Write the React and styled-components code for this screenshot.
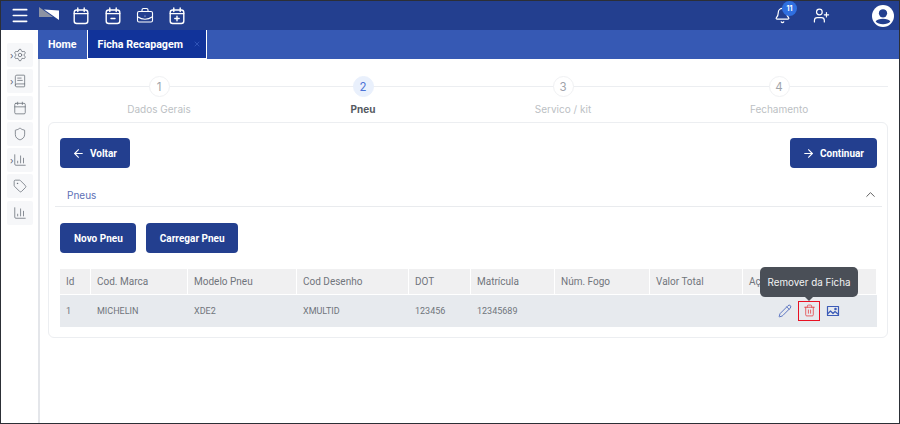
import React from "react";
import styled, { createGlobalStyle } from "styled-components";
import { Menu, BriefcaseBusiness, Bell, UserPlus, Settings, BookText, Calendar, Shield, ChartColumn, Tag, ArrowLeft, ArrowRight, ChevronUp, Pencil, Trash2, X } from "lucide-react";

const Global = createGlobalStyle`
  html, body { margin: 0; padding: 0; background: #fff; }
  * { box-sizing: border-box; }
  body { font-family: Inter, "Noto Sans", sans-serif; }
`;
const Frame = styled.div`
  width: 900px; height: 424px; border: 1px solid #2c2f36;
  display: flex; flex-direction: column; overflow: hidden; position: relative; background: #fff;
`;
const TopBar = styled.header`
  height: 29px; flex: none; background: #233f8f; display: flex; align-items: center; color: #fff; padding-left: 9px; padding-right: 5px;
`;
const MenuBtn = styled.div`display: flex; width: 20px; justify-content: center; margin-right: 9px;`;
const Logo = styled.svg`width: 21px; height: 14px; margin-right: 12px; margin-top: -3px;`;
const TopIcons = styled.div`display: flex; gap: 14px; align-items: center;`;
const CalIcon = styled.svg`width: 18px; height: 18px; fill: none; stroke: #fff; stroke-width: 1.4; stroke-linecap: round;`;
const Spacer = styled.div`flex: 1;`;
const BellWrap = styled.div`position: relative; display: flex; margin-right: 22px;`;
const Badge = styled.span`
  position: absolute; top: -6px; left: 8px; width: 15px; height: 15px; border-radius: 50%; background: #2f6fe0; color: #fff;
  font-size: 7px; font-weight: 700; display: flex; align-items: center; justify-content: center;
`;
const Avatar = styled.svg`width: 22px; height: 22px; margin-left: 42px;`;
const Body = styled.div`flex: 1; display: flex; min-height: 0;`;
const Sidebar = styled.aside`
  width: 37px; flex: none; padding: 13px 0 0 6px; display: flex; flex-direction: column; gap: 2.3px;
`;
const SideItem = styled.div`
  width: 26px; height: 24px; flex: none; background: #f6f7f9; border-radius: 2px; display: flex; align-items: center; justify-content: center; position: relative; color: #666c75;
`;
const Caret = styled.span`
  position: absolute; left: 3px; top: 8px; font-size: 9px; line-height: 10px; color: #5a6270;
`;
const Main = styled.main`flex: 1; display: flex; flex-direction: column; min-width: 0;`;
const TabBar = styled.nav`height: 29px; flex: none; background: #3659b4; display: flex; align-items: stretch; font-family: Roboto, sans-serif;`;
const Tab = styled.div`
  display: flex; align-items: center; color: #fff; font-size: 10.7px; font-weight: 700; padding: 0 10px 0 10px;
  background: ${p => p.$active ? "#11339a" : "transparent"};
  ${p => p.$active ? "border: 1px solid #fff; border-top: none; padding: 0 5px 0 10px; gap: 10px;" : ""}
`;
const Content = styled.div`flex: 1; padding: 0 11px 0 8px; border-left: 2px solid #e4e6ea; display: flex; flex-direction: column;`;
const Stepper = styled.div`display: grid; grid-template-columns: 222px 186px 214px 218px; height: 63px; padding-top: 17px;`;
const Step = styled.div`display: flex; flex-direction: column; align-items: center; position: relative;`;
const Line = styled.div`position: absolute; top: 10px; left: 0; right: 0; height: 1px; background: #eceef1;`;
const Circle = styled.div`
  width: 21px; height: 21px; border-radius: 50%; z-index: 1; display: flex; align-items: center; justify-content: center; font-size: 11.5px;
  background: ${p => p.$active ? "#e9f0fc" : "#fff"}; color: ${p => p.$active ? "#4d73d6" : "#a0a4aa"}; border: 1px solid ${p => p.$active ? "#e9f0fc" : "#f0f1f3"};
`;
const StepLabel = styled.div`
  margin-top: 6px; font-size: 10px; font-weight: ${p => p.$active ? 700 : 400}; color: ${p => p.$active ? "#555a62" : "#bcbfc4"};
`;
const Card = styled.section`
  height: 216px; border: 1px solid #eceef1; border-radius: 6px; padding: 15px 10px 0 11px; display: flex; flex-direction: column;
`;
const ButtonRow = styled.div`display: flex; justify-content: space-between; gap: 8px;`;
const Button = styled.button`
  height: 30px; padding: 0 13px 0 ${p => p.$icon ? 12 : 14}px; border: none; border-radius: 4px; background: #233f8f; color: #fff; font-family: Roboto, sans-serif; font-size: 10px; font-weight: 700;
  display: flex; align-items: center; gap: 5px;
`;
const Section = styled.div`
  margin-top: 15px; height: 24px; margin-left: -5px; margin-right: -5px; padding: 0 4px 0 12px; border-bottom: 1px solid #e9ebee; display: flex; align-items: center; justify-content: space-between; color: #5d70b6; font-size: 10px;
`;
const ActionsRow = styled.div`display: flex; gap: 10px; margin-top: 16px;`;
const Table = styled.div`
  margin-top: 16px; display: grid; grid-template-columns: 31px 97px 109px 112px 62px 84px 95px 93px 134px; font-family: Roboto, sans-serif; font-size: 10px; color: #70757c;
`;
const Head = styled.div`
  height: 26px; background: #f0f0f1; border-right: 1px solid #fff; border-bottom: 1px solid #fff; display: flex; align-items: center; padding-left: 6px;
`;
const Cell = styled.div`
  height: 32px; background: #e7eaee; display: flex; align-items: center; padding: 0 0 1px 6px; font-size: 9px;
`;
const ActionCell = styled(Cell)`gap: 6px; padding-left: 35px;`;
const RedBox = styled.div`
  width: 22px; height: 20px; border: 1.5px solid #e81123; display: flex; align-items: center; justify-content: center;
`;
const PictureIcon = styled.svg`width: 14px; height: 14px; fill: none; stroke: #3d5cb8; stroke-width: 1.2; stroke-linejoin: round;`;
const Tooltip = styled.div`
  position: absolute; left: 759px; top: 266px; width: 98px; height: 30px; background: #4a4f57; color: #f2f3f4; border-radius: 5px; font-size: 9.8px;
  display: flex; align-items: center; justify-content: center;
  &::after { content: ""; position: absolute; bottom: -4px; left: 45px; border-left: 4px solid transparent; border-right: 4px solid transparent; border-top: 4px solid #4a4f57; }
`;

const TopCal = ({ children }) => (
  <CalIcon viewBox="0 0 18 18">
    <rect x="2.2" y="3" width="13.6" height="13.5" rx="2.5" />
    <path d="M5.8 1v3.5M12.2 1v3.5M2.2 6.6h13.6" />
    {children}
  </CalIcon>
);

const side = [
  { I: Settings, c: 1 }, { I: BookText, c: 1 }, { I: Calendar }, { I: Shield }, { I: ChartColumn, c: 1 }, { I: Tag }, { I: ChartColumn },
];
const steps = ["Dados Gerais", "Pneu", "Servico / kit", "Fechamento"];
const heads = ["Id", "Cod. Marca", "Modelo Pneu", "Cod Desenho", "DOT", "Matrícula", "Núm. Fogo", "Valor Total", "Ações"];
const row = ["1", "MICHELIN", "XDE2", "XMULTID", "123456", "12345689", "", ""];

export default function App() {
  return (
    <Frame>
      <Global />
      <TopBar>
        <MenuBtn><Menu size={21} strokeWidth={2} /></MenuBtn>
        <Logo viewBox="0 0 21 14"><path d="M0 0 L0 10 L14 10 Z" fill="#8d93a3" /><path d="M5 2.5 L20 3.5 L20 13 Z" fill="#fff" /></Logo>
        <TopIcons>
          <TopCal />
          <TopCal><path d="M7 11.5h4" /></TopCal>
          <BriefcaseBusiness size={18} strokeWidth={1.5} />
          <TopCal><path d="M6.8 11.5h4.4M9 9.3v4.4" /></TopCal>
        </TopIcons>
        <Spacer />
        <BellWrap><Bell size={17} strokeWidth={1.7} /><Badge>11</Badge></BellWrap>
        <UserPlus size={17} strokeWidth={1.7} />
        <Avatar viewBox="0 0 24 24"><circle cx="12" cy="12" r="12" fill="#fff" /><circle cx="12" cy="9" r="4.5" fill="#233f8f" /><path d="M4 18c2-4 14-4 16 0c-3 4-13 4-16 0z" fill="#233f8f" /></Avatar>
      </TopBar>
      <Body>
        <Sidebar>
          {side.map(({ I, c }, i) => (
            <SideItem key={i}>{c && <Caret>›</Caret>}<I size={14} strokeWidth={1.3} /></SideItem>
          ))}
        </Sidebar>
        <Main>
          <TabBar>
            <Tab>Home</Tab>
            <Tab $active>Ficha Recapagem <X size={8} color="#3f64c4" /></Tab>
          </TabBar>
          <Content>
            <Stepper>
              {steps.map((s, i) => (
                <Step key={s}>
                  <Line />
                  <Circle $active={i === 1}>{i + 1}</Circle>
                  <StepLabel $active={i === 1}>{s}</StepLabel>
                </Step>
              ))}
            </Stepper>
            <Card>
              <ButtonRow>
                <Button $icon><ArrowLeft size={13} />Voltar</Button>
                <Button $icon><ArrowRight size={13} />Continuar</Button>
              </ButtonRow>
              <Section>Pneus<ChevronUp size={15} strokeWidth={1.5} color="#555" /></Section>
              <ActionsRow>
                <Button>Novo Pneu</Button>
                <Button>Carregar Pneu</Button>
              </ActionsRow>
              <Table>
                {heads.map(h => <Head key={h}>{h}</Head>)}
                {row.map((v, i) => <Cell key={i}>{v}</Cell>)}
                <ActionCell>
                  <Pencil size={14} color="#3d5cb8" strokeWidth={1.4} />
                  <RedBox><Trash2 size={13} color="#e5383b" strokeWidth={1.4} /></RedBox>
                  <PictureIcon viewBox="0 0 14 14">
                    <rect x="1.5" y="2.5" width="11" height="9" />
                    <path d="M1.5 10l3-3 2.5 2.5 2-2 3.5 3" />
                    <circle cx="9.5" cy="5" r="0.7" />
                  </PictureIcon>
                </ActionCell>
              </Table>
            </Card>
          </Content>
        </Main>
      </Body>
      <Tooltip>Remover da Ficha</Tooltip>
    </Frame>
  );
}
